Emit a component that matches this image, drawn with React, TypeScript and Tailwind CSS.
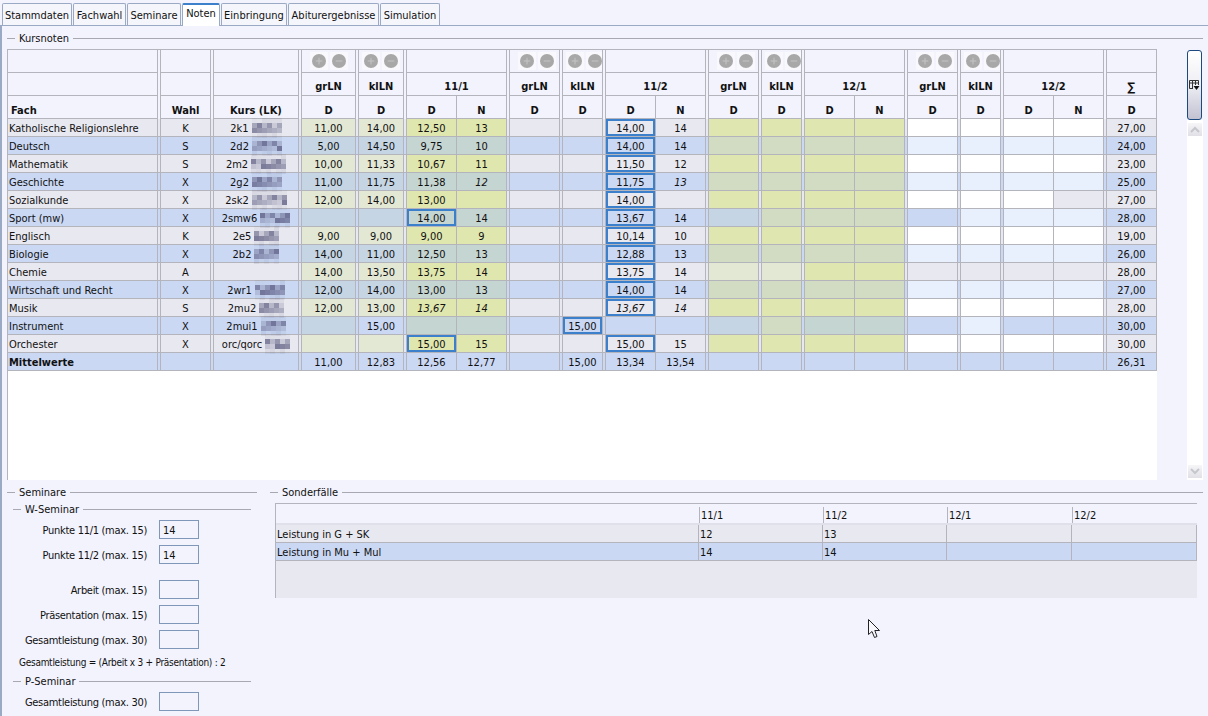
import { Plus, Minus } from 'lucide-react'

type Tone = 'plain' | 'soft' | 'strong' | 'late' | 'open'

const TONES: Record<Tone, [string, string]> = {
  plain: ['bg-[#e8e8f0]', 'bg-[#cad8f4]'],
  soft: ['bg-[#e3e8d5]', 'bg-[#c5d5e3]'],
  strong: ['bg-[#dfe6ae]', 'bg-[#c5d5d1]'],
  late: ['bg-[#dfe6b0]', 'bg-[#d2dcc2]'],
  open: ['bg-white', 'bg-[#e8effd]'],
}

// vier Halbjahre: grLN, klLN, D, N
const COL_TONES: Tone[] = [
  'soft', 'soft', 'strong', 'strong',
  'plain', 'plain', 'plain', 'plain',
  'late', 'late', 'late', 'late',
  'open', 'open', 'open', 'open',
]

type Row = {
  name: string
  wahl: string
  kurs: string
  blur: number
  vals: string[]
  sum: string
  boxed: number[]
  tones?: Record<number, Tone>
}

const ROWS: Row[] = [
  { name: 'Katholische Religionslehre', wahl: 'K', kurs: '2k1', blur: 6, vals: ['11,00', '14,00', '12,50', '13', '', '', '14,00', '14'], sum: '27,00', boxed: [6] },
  { name: 'Deutsch', wahl: 'S', kurs: '2d2', blur: 6, vals: ['5,00', '14,50', '9,75', '10', '', '', '14,00', '14'], sum: '24,00', boxed: [6] },
  { name: 'Mathematik', wahl: 'S', kurs: '2m2', blur: 7, vals: ['10,00', '11,33', '10,67', '11', '', '', '11,50', '12'], sum: '23,00', boxed: [6] },
  { name: 'Geschichte', wahl: 'X', kurs: '2g2', blur: 6, vals: ['11,00', '11,75', '11,38', '*12', '', '', '11,75', '*13'], sum: '25,00', boxed: [6] },
  { name: 'Sozialkunde', wahl: 'X', kurs: '2sk2', blur: 7, vals: ['12,00', '14,00', '13,00', '', '', '', '14,00', ''], sum: '27,00', boxed: [6], tones: { 15: 'plain' } },
  { name: 'Sport (mw)', wahl: 'X', kurs: '2smw6', blur: 6, vals: ['', '', '14,00', '14', '', '', '13,67', '14'], sum: '28,00', boxed: [2, 6], tones: { 8: 'soft', 12: 'plain' } },
  { name: 'Englisch', wahl: 'K', kurs: '2e5', blur: 5, vals: ['9,00', '9,00', '9,00', '9', '', '', '10,14', '10'], sum: '19,00', boxed: [6] },
  { name: 'Biologie', wahl: 'X', kurs: '2b2', blur: 5, vals: ['14,00', '11,00', '12,50', '13', '', '', '12,88', '13'], sum: '26,00', boxed: [6] },
  { name: 'Chemie', wahl: 'A', kurs: '', blur: 0, vals: ['14,00', '13,50', '13,75', '14', '', '', '13,75', '14'], sum: '28,00', boxed: [6], tones: { 8: 'soft', 9: 'soft', 12: 'plain', 13: 'plain', 14: 'plain', 15: 'plain' } },
  { name: 'Wirtschaft und Recht', wahl: 'X', kurs: '2wr1', blur: 6, vals: ['12,00', '14,00', '13,00', '13', '', '', '14,00', '14'], sum: '27,00', boxed: [6] },
  { name: 'Musik', wahl: 'S', kurs: '2mu2', blur: 5, vals: ['12,00', '13,00', '*13,67', '*14', '', '', '*13,67', '*14'], sum: '28,00', boxed: [6] },
  { name: 'Instrument', wahl: 'X', kurs: '2mui1', blur: 5, vals: ['', '15,00', '', '', '', '15,00', '', ''], sum: '30,00', boxed: [5], tones: { 1: 'plain', 8: 'soft', 10: 'strong', 11: 'strong', 12: 'plain', 14: 'plain', 15: 'plain' } },
  { name: 'Orchester', wahl: 'X', kurs: 'orc/qorc', blur: 5, vals: ['', '', '15,00', '15', '', '', '15,00', '15'], sum: '30,00', boxed: [2, 6] },
]

const LINE = 'border-[#b4b4bc]'

function Mosaic({ width, seed }: { width: number; seed: number }) {
  const alphas = [0.08, 0.58, 0.58, 0.1]
  return (
    <span className="relative flex flex-col">
      {alphas.map((a, r) => (
        <span key={r} className="flex">
          {Array.from({ length: width }).map((_, c) => {
            const n = (seed * 7 + r * 13 + c * 29 + r * c * 5) % 10
            return (
              <span
                key={c}
                className="block w-[5px] h-[5px]"
                style={{ backgroundColor: `rgba(80,80,120,${(a * (0.35 + n / 10)).toFixed(2)})` }}
              />
            )
          })}
        </span>
      ))}
    </span>
  )
}

function RoundBtn({ minus }: { minus?: boolean }) {
  return (
    <span className="flex items-center justify-center shrink-0 w-[18px] h-[18px] bg-[#f9f9fd]">
      <span className="flex items-center justify-center w-[14px] h-[14px] rounded-full bg-[#a8a8a8]">
        {minus ? <Minus size={10} strokeWidth={2.5} className="text-[#c4c4c4]" /> : <Plus size={10} strokeWidth={2.5} className="text-[#c4c4c4]" />}
      </span>
    </span>
  )
}

function Sep({ head, bg }: { head?: boolean; bg?: string }) {
  return <div className={`border-r ${LINE} ${head ? '' : `border-b ${bg}`}`} />
}

function HeadCell({ children, span, low, left }: { children?: React.ReactNode; span?: boolean; low?: boolean; left?: boolean }) {
  return (
    <div className={`${span ? 'col-span-2' : ''} h-[23px] flex items-end font-bold border-r border-b ${LINE} ${low ? '' : 'pb-[1px]'} ${left ? 'pl-[3px]' : 'justify-center'}`}>
      {children}
    </div>
  )
}

function Icons({ narrow }: { narrow?: boolean }) {
  return (
    <div className={`h-[23px] flex items-center overflow-hidden border-r border-b ${LINE} ${narrow ? 'pl-[3px] gap-[2px]' : 'pl-[8px] gap-[2px]'}`}>
      <RoundBtn />
      <RoundBtn minus />
    </div>
  )
}

function HeaderRows() {
  const blocks = ['11/1', '11/2', '12/1', '12/2']
  return (
    <>
      {/* Zeile mit den Plus/Minus Knöpfen */}
      <HeadCell /><Sep head /><HeadCell /><Sep head /><HeadCell /><Sep head />
      {blocks.map(b => (
        <div key={b} className="contents">
          <Icons /><Sep head /><Icons narrow /><Sep head /><HeadCell span /><Sep head />
        </div>
      ))}
      <HeadCell />

      <HeadCell /><Sep head /><HeadCell /><Sep head /><HeadCell /><Sep head />
      {blocks.map(b => (
        <div key={b} className="contents">
          <HeadCell>grLN</HeadCell><Sep head />
          <HeadCell>klLN</HeadCell><Sep head />
          <HeadCell span>{b}</HeadCell><Sep head />
        </div>
      ))}
      <HeadCell><span className="text-[12px] leading-[14px]">∑</span></HeadCell>

      <HeadCell low left>Fach</HeadCell><Sep head />
      <HeadCell low>Wahl</HeadCell><Sep head />
      <HeadCell low>Kurs (LK)</HeadCell><Sep head />
      {blocks.map(b => (
        <div key={b} className="contents">
          <HeadCell low>D</HeadCell><Sep head />
          <HeadCell low>D</HeadCell><Sep head />
          <HeadCell low>D</HeadCell>
          <HeadCell low>N</HeadCell><Sep head />
        </div>
      ))}
      <HeadCell low>D</HeadCell>
    </>
  )
}

function Value({ tone, even, text, boxed }: { tone: Tone; even: boolean; text?: string; boxed?: boolean }) {
  const italic = text?.startsWith('*')
  return (
    <div
      className={`h-[18px] pt-[2px] flex items-center justify-center border-r border-b ${LINE} ${TONES[tone][even ? 1 : 0]} ${italic ? 'italic' : ''} ${boxed ? 'shadow-[inset_0_0_0_2px_#3c7fca]' : ''}`}
    >
      {italic ? text?.slice(1) : text}
    </div>
  )
}

function DataRow({ row, index }: { row: Row; index: number }) {
  const even = index % 2 === 1
  const plain = TONES.plain[even ? 1 : 0]
  const cells = COL_TONES.map((t, i) => {
    const tone = row.tones?.[i] ?? t
    const text = i < 8 ? row.vals[i] : ''
    return <Value key={i} tone={tone} even={even} text={text} boxed={row.boxed.includes(i)} />
  })
  const sep = (k: number) => <Sep key={`s${k}`} bg={plain} />
  return (
    <>
      <div className={`h-[18px] pt-[2px] flex items-center pl-[1px] border-r border-b ${LINE} ${plain}`}>{row.name}</div>
      <Sep bg={plain} />
      <div className={`h-[18px] pt-[2px] flex items-center justify-center border-r border-b ${LINE} ${plain}`}>{row.wahl}</div>
      <Sep bg={plain} />
      <div className={`h-[18px] flex items-center justify-center gap-[3px] border-r border-b ${LINE} ${plain}`}>
        <span className="pt-[2px]">{row.kurs}</span>
        {row.blur > 0 && <Mosaic width={row.blur} seed={index + 3} />}
      </div>
      <Sep bg={plain} />
      {[cells[0], sep(0), cells[1], sep(1), cells[2], cells[3], sep(2)]}
      {[cells[4], sep(3), cells[5], sep(4), cells[6], cells[7], sep(5)]}
      {[cells[8], sep(6), cells[9], sep(7), cells[10], cells[11], sep(8)]}
      {[cells[12], sep(9), cells[13], sep(10), cells[14], cells[15], sep(11)]}
      <Value tone="plain" even={even} text={row.sum} />
    </>
  )
}

function AverageRow() {
  const p = TONES.plain[1]
  const v = (t?: string) => <Value tone="plain" even text={t} />
  const s = <Sep bg={p} />
  return (
    <>
      <div className={`h-[18px] pt-[2px] flex items-center pl-[1px] font-bold border-r border-b ${LINE} ${p}`}>Mittelwerte</div>
      {s}{v()}{s}{v()}{s}
      {v('11,00')}{s}{v('12,83')}{s}{v('12,56')}{v('12,77')}{s}
      {v()}{s}{v('15,00')}{s}{v('13,34')}{v('13,54')}{s}
      {v()}{s}{v()}{s}{v()}{v()}{s}
      {v()}{s}{v()}{s}{v()}{v()}{s}
      {v('26,31')}
    </>
  )
}

function SectionTitle({ label, lead }: { label: string; lead: string }) {
  return (
    <div className="flex items-center h-[14px]">
      <div className={`${lead} h-px bg-[#a8a8b0]`} />
      <span className="px-[4px] pt-[1px]">{label}</span>
      <div className="flex-1 h-px bg-[#a8a8b0]" />
    </div>
  )
}

function FieldRow({ label, value, className }: { label: string; value?: string; className?: string }) {
  return (
    <div className={`flex items-center ${className ?? ''}`}>
      <span className="w-[140px] pt-[2px] text-right tracking-[-0.3px]">{label}</span>
      <div className="ml-[12px] w-[40px] h-[19px] pt-[2px] flex items-center pl-[3px] border border-[#7f97b8]">{value}</div>
    </div>
  )
}

function ScrollArrow({ down }: { down?: boolean }) {
  return (
    <div className="w-[14px] h-[13px] mx-auto flex items-center justify-center bg-gradient-to-b from-[#f6f6f8] to-[#e0e0e6]">
      <svg width="10" height="7" viewBox="0 0 10 7" fill="none" className={down ? 'rotate-180' : ''}>
        <path d="M1 6 L5 2 L9 6" stroke="#c6c6ce" strokeWidth="2" />
      </svg>
    </div>
  )
}

const TABS = ['Stammdaten', 'Fachwahl', 'Seminare', 'Noten', 'Einbringung', 'Abiturergebnisse', 'Simulation']
const TAB_WIDTHS = ['w-[70px]', 'w-[53px]', 'w-[54px]', 'w-[38px]', 'w-[66px]', 'w-[91px]', 'w-[60px]']

export default function App() {
  return (
    <div className="relative w-[1208px] h-[716px] overflow-hidden bg-[#f2f3fd] text-[#111] text-[11px] leading-[14px] font-['DejaVu_Sans_Condensed','DejaVu_Sans',sans-serif]">
      {/* Tabs */}
      <div className="flex gap-[1px] pl-[2px] h-[25px] items-end">
        {TABS.map((t, i) => (
          <div
            key={t}
            className={`${TAB_WIDTHS[i]} flex items-center justify-center rounded-t-[2px] border-x ${
              t === 'Noten'
                ? 'h-[23px] pb-[3px] bg-white border-[#9aaac5] border-t-2 border-t-[#3c7fca] relative z-10 -mb-px'
                : 'h-[22px] pt-[2px] border-t border-[#9aaac5] bg-[#f5f6fc]'
            }`}
          >
            {t}
          </div>
        ))}
      </div>

      <div className="border-t border-l-2 border-[#9aaac5] h-[691px] pl-[5px]">
        {/* Kursnoten */}
        <div className="h-[23px] pt-[5px] pr-[5px]">
          <SectionTitle label="Kursnoten" lead="w-[8px]" />
        </div>
        <div className="flex h-[431px]">
          <div className={`w-[1150px] flex flex-col border-l ${LINE}`}>
            <div className={`border-t ${LINE} grid grid-cols-[150px_3px_50px_3px_85px_3px_54px_3px_45px_3px_50px_50px_3px_50px_3px_40px_3px_50px_50px_3px_50px_3px_40px_3px_50px_50px_3px_50px_3px_40px_3px_50px_50px_3px_50px]`}>
              <HeaderRows />
              {ROWS.map((r, i) => (
                <DataRow key={r.name} row={r} index={i} />
              ))}
              <AverageRow />
            </div>
            <div className="flex-1 bg-white" />
          </div>
          <div className="w-[30px]" />
          {/* Scrollleiste */}
          <div className="w-[16px] flex flex-col">
            <div className="h-[70px] w-[15px] mt-[1px] flex items-center justify-center rounded-[3px] border border-[#1c4a80] bg-gradient-to-b from-white via-[#eeeef4] to-[#c2c2d2]">
              <svg width="11" height="11" viewBox="0 0 11 11" fill="none">
                <path d="M0.5 0.5 H9.5 V5 M0.5 0.5 V8.5 H4 M0.5 3 H9.5 M3.5 0.5 V8.5 M6.5 0.5 V5" stroke="#333" strokeWidth="1" />
                <path d="M4.5 6 H10.5 L7.5 10 Z" fill="#111" />
              </svg>
            </div>
            <div className="flex-1 flex flex-col justify-between bg-white pt-[3px] pb-[2px]">
              <ScrollArrow />
              <ScrollArrow down />
            </div>
          </div>
        </div>

        {/* Unterer Bereich */}
        <div className="flex gap-[13px] pt-[5px] pr-[5px]">
          <div className="w-[250px]">
            <SectionTitle label="Seminare" lead="w-[8px]" />
            <div className="ml-[6px] mr-[6px] mt-[3px]">
              <SectionTitle label="W-Seminar" lead="w-[8px]" />
            </div>
            <FieldRow label="Punkte 11/1 (max. 15)" value="14" className="mt-[4px]" />
            <FieldRow label="Punkte 11/2 (max. 15)" value="14" className="mt-[6px]" />
            <FieldRow label="Arbeit (max. 15)" className="mt-[16px]" />
            <FieldRow label="Präsentation (max. 15)" className="mt-[6px]" />
            <FieldRow label="Gesamtleistung (max. 30)" className="mt-[6px]" />
            <div className="mt-[7px] pl-[12px] text-[10px] tracking-[-0.27px]">Gesamtleistung = (Arbeit x 3 + Präsentation) : 2</div>
            <div className="ml-[6px] mr-[6px] mt-[4px]">
              <SectionTitle label="P-Seminar" lead="w-[8px]" />
            </div>
            <FieldRow label="Gesamtleistung (max. 30)" className="mt-[4px]" />
          </div>

          <div className="flex-1">
            <SectionTitle label="Sonderfälle" lead="w-[8px]" />
            <div className={`ml-[5px] mr-[6px] mt-[4px] h-[95px] flex flex-col border-t border-l ${LINE} bg-[#e8e8f0]`}>
              <div className="h-[21px] grid grid-cols-[423px_124px_124px_125px_125px] bg-[#f2f3fd] border-b-2 border-[#e0e0ea]">
                <div />
                {['11/1', '11/2', '12/1', '12/2'].map(t => (
                  <div key={t} className={`border-l ${LINE} pl-[1px] pt-[2px] my-[3px] flex items-center`}>{t}</div>
                ))}
              </div>
              {[
                { label: 'Leistung in G + SK', a: '12', b: '13', bg: 'bg-[#e8e8f0]' },
                { label: 'Leistung in Mu + Mul', a: '14', b: '14', bg: 'bg-[#cad8f4]' },
              ].map(r => (
                <div key={r.label} className={`h-[18px] grid grid-cols-[423px_124px_124px_125px_125px] border-b ${LINE} ${r.bg}`}>
                  <div className={`border-r ${LINE} pl-[1px] pt-[2px] flex items-center`}>{r.label}</div>
                  <div className={`border-r ${LINE} pl-[1px] pt-[2px] flex items-center`}>{r.a}</div>
                  <div className={`border-r ${LINE} pl-[1px] pt-[2px] flex items-center`}>{r.b}</div>
                  <div className={`border-r ${LINE}`} />
                  <div className={`border-r ${LINE}`} />
                </div>
              ))}
            </div>
          </div>
        </div>
      </div>

      {/* Mauszeiger */}
      <svg className="absolute left-[868px] top-[619px]" width="14" height="20" viewBox="0 0 14 20" fill="none">
        <path d="M0.5 0.5 V15.5 L4 12.5 L6.5 18.5 L9 17.5 L6.8 11.5 H11.5 Z" fill="#f8f8fc" stroke="#222" strokeWidth="1" />
      </svg>
    </div>
  )
}
